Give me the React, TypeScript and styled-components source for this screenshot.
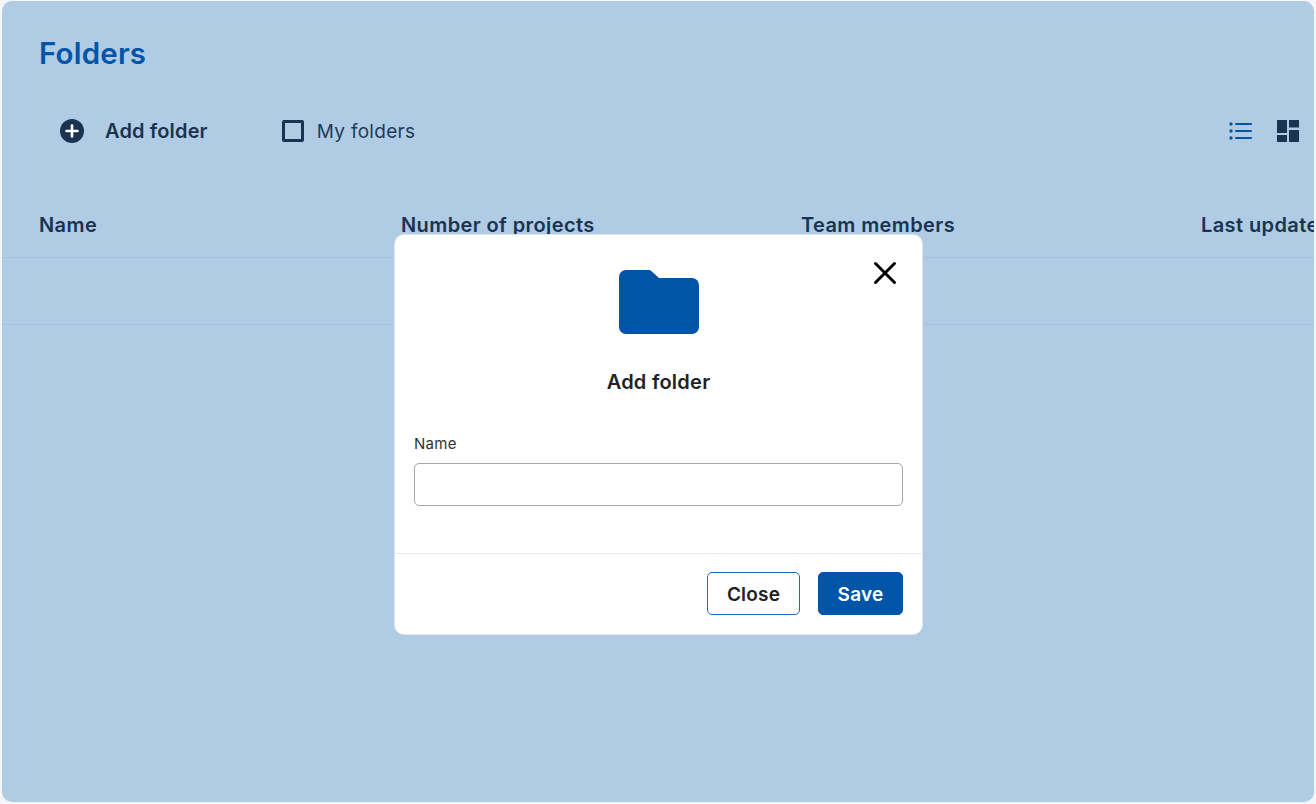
import React from "react";
import styled, { createGlobalStyle } from "styled-components";

const Global = createGlobalStyle`
  html, body { margin: 0; padding: 0; background: #f4f5f6; }
  body { font-family: Inter, "Open Sans", "Liberation Sans", sans-serif; }
  * { box-sizing: border-box; }
`;
const Page = styled.div`
  width: 1316px; height: 804px; padding: 1px 2px 2px 2px; position: relative; overflow: hidden;
`;
const Panel = styled.main`
  width: 100%; height: 100%; background: #b0cbe4; border-radius: 10px; overflow: hidden;
  display: flex; flex-direction: column;
`;
const Title = styled.h1`
  margin: 0; padding: 34px 0 0 37px; height: 71px; font-size: 29.5px; line-height: 36px; font-weight: 600;
  color: #0055a8; letter-spacing: 0.2px;
`;
const Toolbar = styled.div`
  display: flex; align-items: center; height: 40px; margin-top: 39px; padding: 0 15px 0 58px;
`;
const AddButton = styled.button`
  display: flex; align-items: center; gap: 21px; border: 0; background: none; padding: 0; margin: 0;
  font: 600 20px Inter, sans-serif; color: #1a3350; letter-spacing: 0.15px;
`;
const Check = styled.label`
  display: flex; align-items: center; gap: 13px; margin-left: 74px;
  font-size: 19px; font-weight: 400; color: #1f3a58; letter-spacing: 0.3px;
`;
const Box = styled.span`
  width: 22px; height: 22px; border: 3px solid #1a3350; border-radius: 2px;
`;
const Views = styled.div`
  margin-left: auto; display: flex; align-items: center; gap: 24px;
`;
const TableHead = styled.div`
  display: grid; grid-template-columns: 362px 400px 400px 400px; margin-top: 54px; height: 53px;
  padding: 7px 0 0 37px; border-bottom: 1px solid #a5c1db; white-space: nowrap; width: 1700px;
`;
const Col = styled.span`
  font-size: 20px; line-height: 26px; font-weight: 600; color: #1a3350; letter-spacing: 0.4px;
`;
const Row = styled.div`
  height: 67px; border-bottom: 1px solid #a5c1db;
`;
const Modal = styled.section`
  position: absolute; left: 394px; top: 234px; width: 529px; height: 401px; background: #fff;
  border-radius: 10px; border: 1px solid #dfe6ed; display: flex; flex-direction: column;
`;
const CloseX = styled.button`
  position: absolute; right: 25px; top: 25px; width: 26px; height: 26px; border: 0; background: none; padding: 0;
`;
const Top = styled.div`
  display: flex; flex-direction: column; padding: 35px 19px 0; height: 319px; border-bottom: 1px solid #e6e6e6;
`;
const FolderWrap = styled.div`
  display: flex; justify-content: center; height: 65px;
`;
const ModalTitle = styled.h2`
  margin: 35px 0 0; text-align: center; font-size: 20px; line-height: 24px; font-weight: 600; color: #222;
  letter-spacing: 0.25px;
`;
const Label = styled.label`
  margin-top: 40px; font-size: 15px; line-height: 20px; color: #333; letter-spacing: 0.3px;
`;
const Input = styled.input`
  margin-top: 9px; height: 43px; width: 100%; border: 1.5px solid #a8a8a8; border-radius: 5px; background: #fff;
`;
const Footer = styled.div`
  flex: 1; display: flex; justify-content: flex-end; align-items: center; gap: 18px; padding: 0 19px 1px;
`;
const Btn = styled.button<{ $primary?: boolean }>`
  height: 43px; width: ${(p) => (p.$primary ? "85px" : "93px")}; border-radius: 5px;
  border: ${(p) => (p.$primary ? "1px solid #0055a8" : "1.5px solid #1f68b2")};
  background: ${(p) => (p.$primary ? "#0055a8" : "#fff")};
  color: ${(p) => (p.$primary ? "#fff" : "#222")};
  font: 600 19px Inter, sans-serif; letter-spacing: 0.2px; padding: 2px 0 0;
`;

export default function App() {
  return (
    <>
      <Global />
      <Page>
        <Panel>
          <Title>Folders</Title>
          <Toolbar>
            <AddButton>
              <svg width="24" height="24" viewBox="0 0 24 24">
                <circle cx="12" cy="12" r="12" fill="#1a3350" />
                <path d="M12 6.5v11M6.5 12h11" stroke="#fff" strokeWidth="2.6" strokeLinecap="round" />
              </svg>
              Add folder
            </AddButton>
            <Check><Box />My folders</Check>
            <Views>
              <svg width="24" height="20" viewBox="0 0 24 20">
                <g fill="#0055a8">
                  <circle cx="2" cy="3" r="1.7" /><circle cx="2" cy="10" r="1.7" /><circle cx="2" cy="17" r="1.7" />
                  <rect x="6" y="2" width="17" height="2" rx="1" /><rect x="6" y="9" width="17" height="2" rx="1" /><rect x="6" y="16" width="17" height="2" rx="1" />
                </g>
              </svg>
              <svg width="22" height="22" viewBox="0 0 22 22">
                <g fill="#1a3350">
                  <rect x="0" y="0" width="10" height="13" /><rect x="12" y="0" width="10" height="7.5" />
                  <rect x="0" y="15" width="10" height="7" /><rect x="12" y="10" width="10" height="12" />
                </g>
              </svg>
            </Views>
          </Toolbar>
          <TableHead>
            <Col>Name</Col><Col>Number of projects</Col><Col>Team members</Col><Col>Last updated</Col>
          </TableHead>
          <Row />
        </Panel>
        <Modal>
          <CloseX aria-label="Close">
            <svg width="26" height="26" viewBox="0 0 26 26">
              <path d="M4.5 3.5l19 19M23.5 3.5l-19 19" stroke="#000" strokeWidth="3" strokeLinecap="round" />
            </svg>
          </CloseX>
          <Top>
            <FolderWrap>
              <svg width="80" height="65" viewBox="0 0 80 65">
                <path d="M7 0h23c.8 0 1.5.3 2 .8L40 8h33a7 7 0 0 1 7 7v42a7 7 0 0 1-7 7H7a7 7 0 0 1-7-7V7a7 7 0 0 1 7-7z" fill="#0055a8" />
              </svg>
            </FolderWrap>
            <ModalTitle>Add folder</ModalTitle>
            <Label>Name</Label>
            <Input />
          </Top>
          <Footer>
            <Btn>Close</Btn>
            <Btn $primary>Save</Btn>
          </Footer>
        </Modal>
      </Page>
    </>
  );
}
